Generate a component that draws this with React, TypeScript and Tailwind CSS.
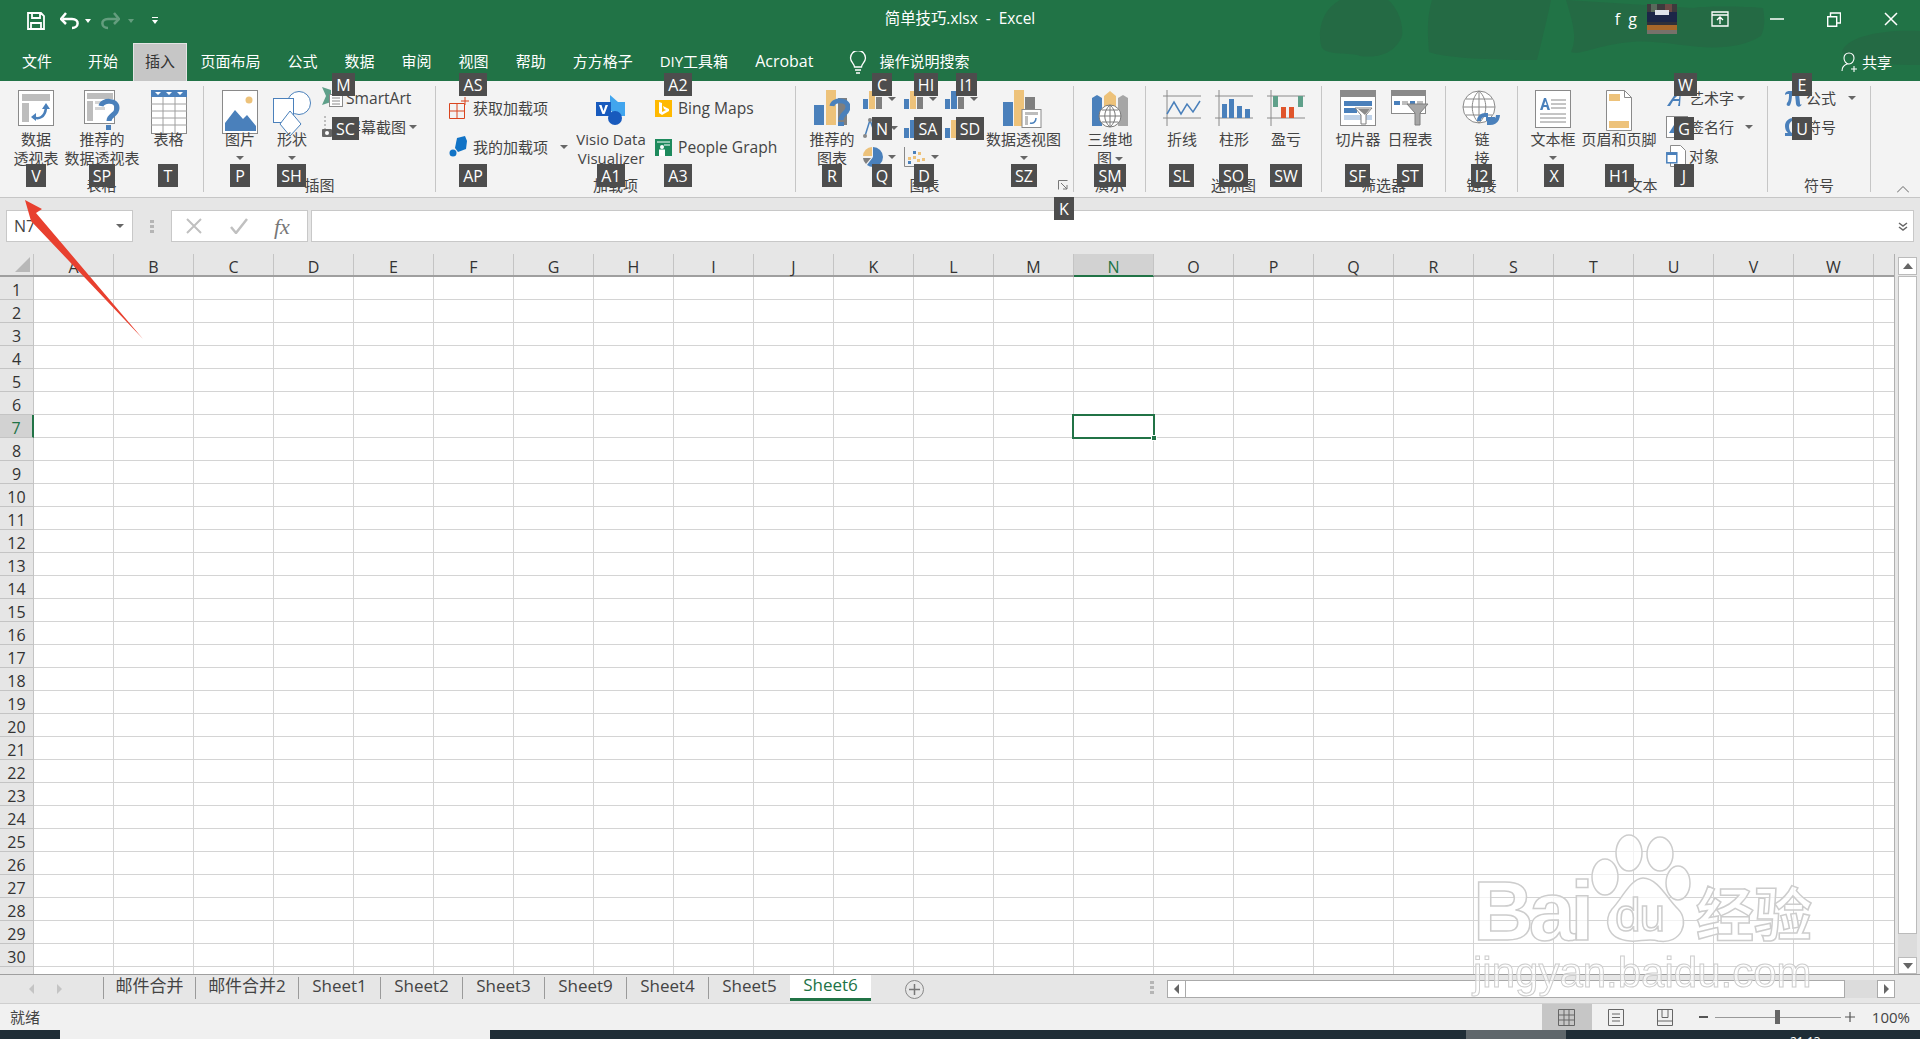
import React from 'react';

const FONT = "font-['Open_Sans','Noto_Sans_CJK_SC',sans-serif]";
const BLUE = '#4a80bb';
const ORANGE = '#edc27a';
const GRAY = '#7f7f7f';

const COLS = 'ABCDEFGHIJKLMNOPQRSTUVW'.split('');
const ROWS = Array.from({ length: 31 }, (_, i) => i + 1);

function Caret({ className = '' }: { className?: string }) {
  return (
    <svg width="8" height="4" viewBox="0 0 8 4" className={'shrink-0 ' + className}>
      <path d="M0 0h8L4 4z" fill="#666" />
    </svg>
  );
}

const Pivot = () => (
  <svg width="36" height="36" viewBox="0 0 36 36">
    <rect x=".5" y=".5" width="35" height="35" fill="#fff" stroke="#8a8a8a" />
    <rect x="4" y="4" width="28" height="7" fill="#bdbdbd" />
    <rect x="4" y="13" width="7" height="19" fill="#bdbdbd" />
    <path d="M15 27c6 3 12 0 13-9" fill="none" stroke={BLUE} strokeWidth="2.5" />
    <path d="M24 19l4-6 4 6zM18 23l-5 4 5 4z" fill={BLUE} />
  </svg>
);

const RecPivot = () => (
  <svg width="36" height="44" viewBox="0 0 36 44" className="-mt-[1px]">
    <rect x=".5" y="1.5" width="30" height="33" fill="#fff" stroke="#8a8a8a" />
    <rect x="3" y="4" width="26" height="6" fill="#bdbdbd" />
    <rect x="3" y="12" width="6" height="20" fill="#bdbdbd" />
    <rect x="11" y="12" width="12" height="3" fill="#d5d5d5" />
    <rect x="11" y="18" width="10" height="3" fill="#d5d5d5" />
    <path d="M17 17c1-6 16-7 16 2 0 7-8 7-8 13" fill="none" stroke={BLUE} strokeWidth="5" />
    <rect x="22" y="36" width="5" height="5" fill={BLUE} />
  </svg>
);

const TableIcon = () => (
  <svg width="36" height="44" viewBox="0 0 36 44">
    <rect x=".5" y=".5" width="35" height="43" fill="#fff" stroke="#8a8a8a" />
    <rect x="0" y="0" width="36" height="7" fill={BLUE} />
    <path d="M4 2h6l-3 3zM15 2h6l-3 3zM26 2h6l-3 3z" fill="#fff" />
    <path d="M0 14h36M0 21h36M0 28h36M0 35h36M12 7v36M24 7v36" stroke="#a0a0a0" fill="none" />
  </svg>
);

const PictureIcon = () => (
  <svg width="36" height="44" viewBox="0 0 36 44">
    <rect x=".5" y=".5" width="35" height="43" fill="#fff" stroke="#8a8a8a" />
    <circle cx="27" cy="10" r="3.5" fill={ORANGE} />
    <path d="M3 41V33L13 20l8 9 4-4 9 11v5z" fill={BLUE} />
  </svg>
);

const ShapesIcon = () => (
  <svg width="38" height="46" viewBox="0 0 38 46">
    <circle cx="26" cy="13" r="11.5" fill="#fff" stroke={BLUE} />
    <rect x=".5" y="8.5" width="20" height="24" fill="#fff" stroke={BLUE} />
    <path d="M17 21l11 13-11 12L7 34z" fill="#fff" stroke={BLUE} />
  </svg>
);

const SmartArtIcon = () => (
  <svg width="24" height="22" viewBox="0 0 24 22">
    <path d="M0 0l9 3v12l-9 3 4-9z" fill="#5fa08a" />
    <rect x="7.5" y="7.5" width="13" height="12" fill="#fff" stroke="#8a8a8a" />
    <path d="M10 11h8M10 14h8M10 17h8" stroke="#8a8a8a" />
  </svg>
);

const ShotIcon = () => (
  <svg width="24" height="22" viewBox="0 0 24 22">
    <path d="M3 0v14" stroke="#888" strokeDasharray="2 2" />
    <rect x="0" y="13" width="10" height="8" rx="1" fill="#666" />
    <circle cx="5" cy="17" r="2" fill="#fff" />
  </svg>
);

const GetAddin = () => (
  <svg width="22" height="22" viewBox="0 0 22 22">
    <path d="M.5 6.5h15v15H.5zM8 6.5v15M.5 14h15" fill="none" stroke="#d9441e" />
    <path d="M16 0v8M12 4h8" stroke="#d9441e" />
  </svg>
);

const MyAddin = () => (
  <svg width="18" height="22" viewBox="0 0 18 22">
    <path d="M8 2l8-2 2 5-1 8-8 3-3-4z" fill="#1173c6" />
    <circle cx="4" cy="17" r="3.5" fill="#1173c6" />
  </svg>
);

const VisioIcon = () => (
  <svg width="30" height="30" viewBox="0 0 30 30" className="mt-[5px]">
    <path d="M14 0l8 7h7v14h-8l-7-6z" fill="#41a5ee" />
    <circle cx="19" cy="23" r="7" fill="#185abd" />
    <rect x="0" y="7" width="15" height="14" fill="#185abd" />
    <path d="M3 10h2.5l2 6 2-6H12l-3.4 9H6.400z" fill="#fff" />
  </svg>
);

const BingIcon = () => (
  <svg width="17" height="17" viewBox="0 0 17 17">
    <rect width="17" height="17" fill="#ffb900" />
    <path d="M4 2l3 1v9l4-2-2-1-1-3 6 3v2l-7 4-3-2z" fill="#fff" />
  </svg>
);

const PeopleIcon = () => (
  <svg width="17" height="17" viewBox="0 0 17 17">
    <rect width="17" height="17" fill="#1d8a5c" />
    <path d="M2 3h13M9 6h6" stroke="#fff" fill="none" />
    <circle cx="7" cy="8" r="2" fill="#fff" />
    <rect x="4" y="10.500" width="6" height="6.500" fill="#fff" />
  </svg>
);

const RecChart = () => (
  <svg width="36" height="36" viewBox="0 0 36 36">
    <rect x="0" y="15" width="10" height="20" fill={BLUE} />
    <rect x="12" y="0" width="10" height="35" fill={ORANGE} />
    <rect x="24" y="8" width="9" height="27" fill={GRAY} />
    <path d="M18 16c1-7 16-7 16 1 0 7-7 6-7 13" fill="none" stroke={BLUE} strokeWidth="5" />
    <rect x="24" y="32" width="6" height="5" fill={BLUE} />
  </svg>
);

const MiniBars = ({ a, b, c }: { a: string; b: string; c: string }) => (
  <svg width="20" height="20" viewBox="0 0 20 20">
    <rect x="0" y="10" width="5" height="10" fill={a} />
    <rect x="6" y="2" width="6" height="18" fill={b} />
    <rect x="13" y="8" width="6" height="12" fill={c} />
  </svg>
);

const PieMini = () => (
  <svg width="20" height="20" viewBox="0 0 20 20">
    <path d="M10 10V0a10 10 0 0 1 0 20 10 10 0 0 1-6-2z" fill={BLUE} />
    <path d="M9 9V0A9 9 0 0 0 0 9z" fill={ORANGE} />
    <path d="M8 11l-5 6a9 9 0 0 1-3-6z" fill={GRAY} />
  </svg>
);

const ScatterMini = () => (
  <svg width="22" height="20" viewBox="0 0 22 20">
    <path d="M.5 0v19.500H22" fill="none" stroke="#888" />
    <path d="M4 10h3v3H4zM9 9h3v3H9zM14 5h3v3h-3zM13 12h3v3h-3zM18 11h3v3h-3z" fill={ORANGE} />
    <path d="M9 4h3v3H9zM4 14h3v3H4z" fill={BLUE} />
  </svg>
);

const StatMini = () => (
  <svg width="22" height="20" viewBox="0 0 22 20">
    <path d="M2 18L7 2l5 14" fill="none" stroke={BLUE} strokeWidth="1.500" />
    <circle cx="7" cy="2" r="2" fill="#888" />
    <circle cx="2" cy="18" r="2" fill="#888" />
    <circle cx="12" cy="16" r="2" fill="#888" />
  </svg>
);

const PivotChart = () => (
  <svg width="42" height="38" viewBox="0 0 42 38">
    <rect x="0" y="12" width="10" height="24" fill={BLUE} />
    <rect x="11" y="0" width="10" height="36" fill={ORANGE} />
    <rect x="22" y="7" width="10" height="29" fill={GRAY} />
    <rect x="19" y="19.500" width="19" height="18" fill="#fff" stroke="#8a8a8a" />
    <rect x="22" y="22" width="13" height="3" fill="#bdbdbd" />
    <rect x="22" y="26" width="3" height="9" fill="#bdbdbd" />
    <path d="M27 33c3 1 6-1 6-5" fill="none" stroke={BLUE} strokeWidth="1.500" />
  </svg>
);

const MapIcon = () => (
  <svg width="36" height="38" viewBox="0 0 36 38">
    <path d="M0 8l5-3 5 3v28H0z" fill={BLUE} />
    <path d="M12 6l6-5 6 5v30H12z" fill={ORANGE} />
    <path d="M26 8l5-3 5 3v28H26z" fill="#a6a6a6" />
    <circle cx="18" cy="26" r="11" fill="#fff" stroke="#7a7a7a" />
    <path d="M7 26h22M18 15v22M10 20h16M10 32h16M18 15c-7 6-7 16 0 22M18 15c7 6 7 16 0 22" fill="none" stroke="#7a7a7a" />
  </svg>
);

const LineSpark = () => (
  <svg width="38" height="36" viewBox="0 0 38 36">
    <path d="M0 6h38M0 28h38M4 0v36" stroke="#8a8a8a" fill="none" />
    <path d="M4 24l7-12 7 12 6-10 6 8 7-11" fill="none" stroke={BLUE} strokeWidth="1.500" />
  </svg>
);

const ColSpark = () => (
  <svg width="38" height="36" viewBox="0 0 38 36">
    <path d="M0 6h38M0 28h38M4 0v36" stroke="#8a8a8a" fill="none" />
    <path d="M7 14h5v14H7zM14 9h5v19h-5zM22 16h5v12h-5zM30 19h5v9h-5z" fill={BLUE} />
  </svg>
);

const WinSpark = () => (
  <svg width="38" height="36" viewBox="0 0 38 36">
    <path d="M0 6h38M0 28h38M4 0v36" stroke="#8a8a8a" fill="none" />
    <path d="M6 6h5v11H6zM31 6h5v11h-5z" fill="#5fa08a" />
    <path d="M14 17h5v11h-5zM22 17h5v11h-5z" fill="#e0552b" />
  </svg>
);

const SlicerIcon = () => (
  <svg width="36" height="36" viewBox="0 0 36 36">
    <rect x=".5" y=".5" width="35" height="35" fill="#fff" stroke="#8a8a8a" />
    <rect x="0" y="0" width="36" height="7" fill="#8a8a8a" />
    <rect x="4" y="11" width="28" height="5" fill={BLUE} />
    <rect x="4" y="18" width="13" height="5" fill={BLUE} />
    <rect x="4" y="25" width="28" height="5" fill="#bfd2e8" />
    <path d="M15 18h17l-6 7v9h-5v-9z" fill="#fff" stroke="#7f7f7f" />
    <path d="M18 19h12l-5 6z" fill="#8a8a8a" />
  </svg>
);

const TimelineIcon = () => (
  <svg width="38" height="36" viewBox="0 0 38 36">
    <rect x=".5" y=".5" width="34" height="23" fill="#fff" stroke="#8a8a8a" />
    <rect x="0" y="0" width="35" height="6" fill="#8a8a8a" />
    <path d="M3 11h6v4H3zM19 11h5v4h-5z" fill={BLUE} />
    <path d="M11 11h6v4h-6zM26 11h6v4h-6z" fill="#bdbdbd" />
    <path d="M16 14h21l-8 9v12h-5V23z" fill="#a6a6a6" stroke="#7f7f7f" />
  </svg>
);

const GlobeLink = () => (
  <svg width="40" height="38" viewBox="0 0 40 38">
    <circle cx="17" cy="17" r="16" fill="#fff" stroke="#8a8a8a" />
    <path d="M1 17h32M17 1v32M4 9h26M4 25h26M17 1c-9 8-9 24 0 32M17 1c9 8 9 24 0 32" fill="none" stroke="#8a8a8a" />
    <path d="M17 31c0-4 3-6 6-6h3M25 33h3c8 0 8-8 8-8M24 29h9" fill="none" stroke={BLUE} strokeWidth="4" />
  </svg>
);

const TextBoxIcon = () => (
  <svg width="36" height="38" viewBox="0 0 36 38">
    <rect x=".5" y=".5" width="35" height="37" fill="#fff" stroke="#8a8a8a" />
    <path d="M5 20l4-12h2l4 12h-2.500l-1-3H8.500l-1 3zM9 15h2.800L10.400 11z" fill={BLUE} fillRule="evenodd" />
    <path d="M16 10h15M16 14h15M16 18h15M5 24h26M5 28h26M5 32h26" stroke="#8a8a8a" />
  </svg>
);

const HeaderIcon = () => (
  <svg width="26" height="42" viewBox="0 0 26 42">
    <path d="M.5.500h18l7 7v33H.5z" fill="#fff" stroke="#8a8a8a" />
    <path d="M18.500.500v7h7" fill="none" stroke="#8a8a8a" />
    <rect x="3" y="4" width="11" height="7" fill={ORANGE} />
    <rect x="3" y="31" width="20" height="7" fill={ORANGE} />
  </svg>
);

const WordArt = () => (
  <svg width="22" height="20" viewBox="0 0 22 20">
    <path d="M1 18L12 2h3l-1 16h-2l1-5H7l-3 5zM8 11h5l1-6z" fill={BLUE} fillRule="evenodd" />
  </svg>
);

const SignIcon = () => (
  <svg width="22" height="22" viewBox="0 0 22 22">
    <rect x=".5" y=".5" width="21" height="21" fill="#fff" stroke="#8a8a8a" />
    <path d="M3 17l5-8 3 8z" fill={BLUE} />
  </svg>
);

const ObjectIcon = () => (
  <svg width="20" height="22" viewBox="0 0 20 22">
    <path d="M4.500.500h10l5 5v16h-15z" fill="#fff" stroke="#8a8a8a" />
    <rect x=".8" y="7.800" width="10" height="10" fill="#fff" stroke={BLUE} strokeWidth="1.500" />
    <rect x="1" y="8" width="10" height="2" fill={BLUE} />
  </svg>
);

const PiIcon = () => (
  <svg width="18" height="20" viewBox="0 0 18 20">
    <path d="M1 6c1-3 3-3 5-3h12v3h-3l1 9c0 2 1 2 2 1-1 3-5 4-6 0l-1-10H8c0 5-1 11-3 12-2 0-3-1-2-3 2-2 2-6 2-9-2 0-3 0-4 1z" fill={BLUE} />
  </svg>
);

const OmegaIcon = () => (
  <svg width="18" height="20" viewBox="0 0 18 20">
    <path d="M1 19v-3h3C2 14 1 12 1 9c0-5 4-8 8-8s8 3 8 8c0 3-1 5-3 7h3v3h-7v-3c2-1 3-4 3-7 0-3-2-5-4-5S5 6 5 9c0 3 1 6 3 7v3z" fill={BLUE} />
  </svg>
);

function Large({ w, icon, lines, caret, className = '' }: { w: string; icon: React.ReactNode; lines: string[]; caret?: 'below' | 'inline'; className?: string }) {
  return (
    <div className={'flex shrink-0 flex-col items-center pt-[4px] ' + w + ' ' + className}>
      <div className="flex h-[40px] items-start justify-center">{icon}</div>
      {lines.map((l, i) => (
        <div key={i} className="flex items-center gap-[3px] whitespace-nowrap leading-[19px]">
          {l}
          {caret === 'inline' && i === lines.length - 1 && <Caret />}
        </div>
      ))}
      {caret === 'below' && <Caret className="mt-[7px]" />}
    </div>
  );
}

function Small({ icon, label, caret, iconW = 'w-[24px]', latin }: { icon: React.ReactNode; label: string; caret?: string; iconW?: string; latin?: boolean }) {
  return (
    <div className="flex h-[26px] items-center whitespace-nowrap">
      <div className={'flex shrink-0 items-center ' + iconW}>{icon}</div>
      <span className={latin ? 'pt-[2px] text-[15.600px]' : ''}>{label}</span>
      {caret && <Caret className={caret} />}
    </div>
  );
}

function Group({ w, label, children, launcher }: { w: string; label: string; children: React.ReactNode; launcher?: boolean }) {
  return (
    <div className={'mt-[5px] flex h-[106px] shrink-0 flex-col border-r border-[#c6c6c6] ' + w}>
      <div className="flex h-[90px] shrink-0">{children}</div>
      <div className="flex h-[20px] shrink-0 items-center pb-[2px] leading-[20px]">
        <div className="flex-1 text-center">{label}</div>
        {launcher && (
          <div className="flex w-[20px] items-center pl-[5px]">
            <svg width="10" height="10" viewBox="0 0 10 10">
              <path d="M.5 9.500v-9h9M3 3l6 6M5 9h4V5" fill="none" stroke="#777" />
            </svg>
          </div>
        )}
      </div>
    </div>
  );
}

function Key({ t, row, x }: { t: string; row: string; x: string }) {
  return (
    <div className={'absolute z-20 flex h-[23px] items-center justify-center bg-[#4d4d4d] text-[16px] text-white ' + row + ' ' + x}>
      {t}
    </div>
  );
}

const TOP = 'top-[73px]';
const MID = 'top-[117px]';
const BOT = 'top-[164px]';

function Tab({ label, active, className = 'px-[12.500px]' }: { label: string; active?: boolean; className?: string }) {
  return (
    <div
      className={
        'flex h-[38px] items-center whitespace-nowrap border border-b-0 pb-[3px] ' +
        (active ? 'border-[#e4e4e4] bg-[#c6c6c6] text-[#333] ' : 'border-transparent text-white ') +
        className
      }
    >
      {label}
    </div>
  );
}

function SheetTab({ label, w, active }: { label: string; w: string; active?: boolean }) {
  return (
    <div
      className={
        'flex shrink-0 items-center justify-center whitespace-nowrap ' +
        w +
        (active
          ? ' h-[26px] border-b-[3px] border-[#217346] bg-white pb-[3px] text-[#217346]'
          : ' my-[2px] h-[22px] border-l border-[#9a9a9a] pb-[5px] text-[#444]')
      }
    >
      {label}
    </div>
  );
}

export default function App() {
  return (
    <div className={'relative flex h-[1039px] w-[1920px] flex-col overflow-hidden bg-[#e6e6e6] text-[15px] text-[#444] ' + FONT}>
      {/* title + tabs */}
      <div className="relative h-[81px] shrink-0 bg-[#217346] text-white">
        <svg width="1920" height="81" viewBox="0 0 1920 81" className="absolute left-0 top-0">
          <path
            d="M1340 0c-22 12-22 38-18 48 6 8 30 4 38 8 14 2 34 0 42-20 2-14-6-30-14-36zM1432 0c-6 20-4 38-3 52 16 6 60 8 108 8 4-16 10-40 14-60zM1566 0c6 20 12 38 5 52 8 4 30-8 60-10 40-4 90 18 130-6 4-8 4-18 2-28-20-2-60-2-70 0z"
            fill="#246a44"
          />
          <path d="M1920 31c-40-2-72 6-78 20 2 8 30 14 78 14z" fill="#246a44" />
        </svg>
        <div className="relative grid h-[43px] grid-cols-[1fr_auto_1fr] items-center pb-[5px]">
          <div className="flex items-center pt-[3px]">
            <svg width="18" height="18" viewBox="0 0 18 18" className="ml-[27px]">
              <path d="M1 1h13l3 3v13H1zM5 1v5h8V1M4 17v-6h10v6" fill="none" stroke="#fff" strokeWidth="1.800" />
            </svg>
            <svg width="20" height="18" viewBox="0 0 20 18" className="ml-[15px]">
              <path d="M3 7h9c8 0 7 9 0 9" fill="none" stroke="#fff" strokeWidth="2.500" />
              <path d="M6 1L1 7l5 5" fill="none" stroke="#fff" strokeWidth="2.500" />
            </svg>
            <svg width="6" height="4" viewBox="0 0 6 4" className="ml-[5px]">
              <path d="M0 0h6L3 4z" fill="#fff" />
            </svg>
            <svg width="20" height="18" viewBox="0 0 20 18" className="ml-[9px] opacity-30">
              <path d="M17 7H8c-8 0-7 9 0 9" fill="none" stroke="#fff" strokeWidth="2.500" />
              <path d="M14 1l5 6-5 5" fill="none" stroke="#fff" strokeWidth="2.500" />
            </svg>
            <svg width="6" height="4" viewBox="0 0 6 4" className="ml-[8px] opacity-30">
              <path d="M0 0h6L3 4z" fill="#fff" />
            </svg>
            <svg width="6" height="8" viewBox="0 0 6 8" className="ml-[18px]">
              <path d="M0 0h6v1H0zM0 3h6L3 7z" fill="#fff" />
            </svg>
          </div>
          <div className="whitespace-pre text-[15.400px]">简单技巧.xlsx  -  Excel</div>
          <div className="flex items-center justify-end">
            <span className="text-[16px] tracking-[2px]">f g</span>
            <svg width="30" height="30" viewBox="0 0 30 30" className="ml-[8px]">
              <rect width="30" height="30" fill="#3d3a3d" />
              <rect x="4" y="0" width="6" height="8" fill="#5a6a5c" />
              <rect x="18" y="0" width="7" height="8" fill="#6b4a45" />
              <rect y="8" width="30" height="10" fill="#1c2648" />
              <rect x="8" y="6" width="14" height="5" fill="#dfe3ea" />
              <rect y="18" width="30" height="3" fill="#30303a" />
              <rect y="21" width="30" height="5" fill="#a8672a" />
              <rect y="26" width="30" height="4" fill="#77716a" />
            </svg>
            <div className="ml-[14px] flex w-[57px] justify-center">
              <svg width="18" height="16" viewBox="0 0 18 16">
                <path d="M1 1h16v14H1zM1 4h16M9 13V6M6 9l3-3 3 3" fill="none" stroke="#fff" strokeWidth="1.300" />
              </svg>
            </div>
            <div className="flex w-[57px] justify-center">
              <svg width="14" height="2" viewBox="0 0 14 2">
                <path d="M0 1h14" stroke="#fff" strokeWidth="1.500" />
              </svg>
            </div>
            <div className="flex w-[57px] justify-center">
              <svg width="14" height="15" viewBox="0 0 14 15">
                <path d="M.7 4.700h9v9.600h-9zM3.500 4.500V1h10v10h-3.500" fill="none" stroke="#fff" strokeWidth="1.400" />
              </svg>
            </div>
            <div className="flex w-[57px] justify-center">
              <svg width="14" height="14" viewBox="0 0 14 14">
                <path d="M1 1l12 12M13 1L1 13" stroke="#fff" strokeWidth="1.500" />
              </svg>
            </div>
            <div className="w-[1px]" />
          </div>
        </div>
        <div className="relative flex h-[38px] items-end">
          <Tab label="文件" className="pl-[21px] pr-[18px]" />
          <Tab label="开始" className="pl-[16px] pr-[14px]" />
          <Tab label="插入" active className="px-[11px]" />
          <Tab label="页面布局" />
          <Tab label="公式" />
          <Tab label="数据" />
          <Tab label="审阅" />
          <Tab label="视图" />
          <Tab label="帮助" />
          <Tab label="方方格子" />
          <Tab label="DIY工具箱" />
          <Tab label="Acrobat" className="pl-[12.500px] pr-[35px] text-[16px]" />
          <svg width="18" height="24" viewBox="0 0 18 24" className="mb-[6px] shrink-0">
            <path d="M5.500 16c0-3-4-5-4-9a7.500 7.500 0 0 1 15 0c0 4-4 6-4 9zM6 19h6M7 22h4" fill="none" stroke="#fff" strokeWidth="1.300" />
          </svg>
          <div className="flex h-[38px] items-center whitespace-nowrap pb-[2px] pl-[12px]">操作说明搜索</div>
          <div className="flex-1" />
          <div className="flex h-[38px] items-center whitespace-nowrap pr-[28px]">
            <svg width="18" height="20" viewBox="0 0 18 20" className="mr-[3px]">
              <path d="M8 1c3 0 5 2 5 5s-2 6-5 6-5-3-5-6 2-5 5-5zM1 19c0-4 2-6 5-7M10 12M13 14v6M10 17h6" fill="none" stroke="#fff" strokeWidth="1.100" />
            </svg>
            共享
          </div>
        </div>
      </div>

      {/* ribbon */}
      <div className="relative flex h-[117px] shrink-0 items-start border-b border-[#c6c6c6] bg-[#f3f3f3]">
        <Group w="w-[204px]" label="表格">
          <Large w="w-[68px] ml-[2px]" icon={<Pivot />} lines={['数据', '透视表']} />
          <Large w="w-[64px]" icon={<RecPivot />} lines={['推荐的', '数据透视表']} />
          <Large w="w-[69px]" icon={<TableIcon />} lines={['表格']} />
        </Group>
        <Group w="w-[232px]" label="插图">
          <Large w="w-[62px] ml-[5px]" icon={<PictureIcon />} lines={['图片']} caret="below" />
          <Large w="w-[42px]" icon={<ShapesIcon />} lines={['形状']} caret="below" />
          <div className="ml-[9px] -mt-[1px] flex flex-col gap-[3px]">
            <Small icon={<SmartArtIcon />} label="SmartArt" latin />
            <Small icon={<ShotIcon />} label="屏幕截图" caret="ml-[3px]" />
          </div>
        </Group>
        <Group w="w-[360px]" label="加载项">
          <div className="ml-[13px] flex w-[126px] shrink-0 flex-col gap-[13px] pt-[9px]">
            <Small icon={<GetAddin />} label="获取加载项" />
            <Small icon={<MyAddin />} label="我的加载项" caret="ml-[12px]" />
          </div>
          <Large w="w-[72px]" icon={<VisioIcon />} lines={['Visio Data', 'Visualizer']} />
          <div className="ml-[8px] flex flex-col gap-[13px] pt-[9px]">
            <Small icon={<BingIcon />} label="Bing Maps" iconW="w-[23px]" latin />
            <Small icon={<PeopleIcon />} label="People Graph" iconW="w-[23px]" latin />
          </div>
        </Group>
        <Group w="w-[278px]" label="图表" launcher>
          <Large w="w-[60px] ml-[6px]" icon={<RecChart />} lines={['推荐的', '图表']} />
          <div className="ml-[1px] grid h-[84px] w-[123px] shrink-0 grid-cols-3 gap-y-[3px]">
            <div className="flex h-[26px] items-center gap-[5px]"><MiniBars a={BLUE} b={ORANGE} c={GRAY} /><Caret /></div>
            <div className="flex h-[26px] items-center gap-[5px]"><MiniBars a={BLUE} b={ORANGE} c={GRAY} /><Caret /></div>
            <div className="flex h-[26px] items-center gap-[5px]"><MiniBars a={BLUE} b={BLUE} c={GRAY} /><Caret /></div>
            <div className="flex h-[26px] items-center gap-[5px]"><StatMini /><Caret /></div>
            <div className="flex h-[26px] items-center gap-[5px]"><MiniBars a={BLUE} b={BLUE} c={BLUE} /><Caret /></div>
            <div className="flex h-[26px] items-center gap-[5px]"><MiniBars a={BLUE} b={ORANGE} c={GRAY} /><Caret /></div>
            <div className="flex h-[26px] items-center gap-[5px]"><PieMini /><Caret /></div>
            <div className="flex h-[26px] items-center gap-[5px]"><ScatterMini /><Caret /></div>
          </div>
          <Large w="w-[75px]" icon={<PivotChart />} lines={['数据透视图']} caret="below" />
        </Group>
        <Group w="w-[72px]" label="演示">
          <Large w="w-[72px]" icon={<MapIcon />} lines={['三维地', '图']} caret="inline" />
        </Group>
        <Group w="w-[176px]" label="迷你图">
          <Large w="w-[52px] ml-[10px]" icon={<LineSpark />} lines={['折线']} />
          <Large w="w-[52px]" icon={<ColSpark />} lines={['柱形']} />
          <Large w="w-[52px]" icon={<WinSpark />} lines={['盈亏']} />
        </Group>
        <Group w="w-[124px]" label="筛选器">
          <Large w="w-[52px] ml-[10px]" icon={<SlicerIcon />} lines={['切片器']} />
          <Large w="w-[52px]" icon={<TimelineIcon />} lines={['日程表']} />
        </Group>
        <Group w="w-[72px]" label="链接">
          <Large w="w-[72px]" icon={<GlobeLink />} lines={['链', '接']} />
        </Group>
        <Group w="w-[250px]" label="文本">
          <Large w="w-[50px] ml-[10px]" icon={<TextBoxIcon />} lines={['文本框']} caret="below" />
          <Large w="w-[82px]" icon={<HeaderIcon />} lines={['页眉和页脚']} />
          <div className="ml-[6px] -mt-[1px] flex flex-col gap-[3px]">
            <Small icon={<WordArt />} label="艺术字" caret="ml-[3px]" iconW="w-[23px]" />
            <Small icon={<SignIcon />} label="签名行" caret="ml-[11px]" iconW="w-[23px]" />
            <Small icon={<ObjectIcon />} label="对象" iconW="w-[23px]" />
          </div>
        </Group>
        <Group w="w-[103px]" label="符号">
          <div className="ml-[16px] -mt-[1px] flex flex-col gap-[3px]">
            <Small icon={<PiIcon />} label="公式" caret="ml-[12px]" iconW="w-[22px]" />
            <Small icon={<OmegaIcon />} label="符号" iconW="w-[22px]" />
          </div>
        </Group>
        <div className="flex flex-1 justify-end pr-[11px] pt-[105px]">
          <svg width="12" height="7" viewBox="0 0 12 7">
            <path d="M0 6.500L6 .5l6 6" fill="none" stroke="#666" />
          </svg>
        </div>
      </div>

      {/* formula bar */}
      <div className="flex h-[56px] shrink-0 items-start pt-[12px]">
        <div className="ml-[6px] flex h-[32px] w-[127px] shrink-0 items-center justify-between border border-[#c8c8c8] bg-white pl-[7px] pr-[8px] text-[16px]">
          N7
          <Caret />
        </div>
        <div className="ml-[17px] mt-[10px] flex w-[4px] shrink-0 flex-col gap-[2px]">
          <div className="h-[3px] bg-[#b5b5b5]" />
          <div className="h-[3px] bg-[#b5b5b5]" />
          <div className="h-[3px] bg-[#b5b5b5]" />
        </div>
        <div className="ml-[17px] flex h-[32px] w-[137px] shrink-0 items-center border border-[#c8c8c8] bg-white">
          <svg width="16" height="16" viewBox="0 0 16 16" className="ml-[14px]">
            <path d="M1 1l14 14M15 1L1 15" stroke="#c0c0c0" strokeWidth="2" />
          </svg>
          <svg width="18" height="16" viewBox="0 0 18 16" className="ml-[28px]">
            <path d="M1 9l5 6L17 1" fill="none" stroke="#c0c0c0" strokeWidth="2.500" />
          </svg>
          <span className="ml-[26px] font-['Liberation_Serif',serif] text-[22px] italic text-[#777]">fx</span>
        </div>
        <div className="ml-[3px] flex h-[32px] w-[1603px] shrink-0 items-center justify-end border border-[#c8c8c8] bg-white pr-[5px]">
          <svg width="10" height="9" viewBox="0 0 10 9">
            <path d="M1 1l4 3 4-3M1 5l4 3 4-3" fill="none" stroke="#666" strokeWidth="1.500" />
          </svg>
        </div>
      </div>

      {/* sheet */}
      <div className="relative flex h-[720px] shrink-0">
        <div className="relative w-[1895px] shrink-0 overflow-hidden border-r border-[#b0b0b0] bg-white">
          <div className="flex h-[23px] border-b-2 border-[#9f9f9f] bg-[#e6e6e6] text-[16px] text-[#333]">
            <div className="flex w-[34px] shrink-0 items-end justify-end border-r border-[#c4c4c4] p-[3px]">
              <svg width="15" height="15" viewBox="0 0 15 15">
                <path d="M15 0v15H0z" fill="#b8b8b8" />
              </svg>
            </div>
            {COLS.map((c) => (
              <div
                key={c}
                className={
                  'flex w-[80px] shrink-0 items-center justify-center border-r border-[#c4c4c4] pt-[4px] ' +
                  (c === 'N' ? '-mb-[2px] border-b-2 border-b-[#217346] bg-[#d2d2d2] text-[#217346]' : '')
                }
              >
                {c}
              </div>
            ))}
          </div>
          {ROWS.map((r) => (
            <div key={r} className="flex h-[23px]">
              <div
                className={
                  'flex w-[34px] shrink-0 items-center justify-center border-b border-r border-[#c4c4c4] pt-[3px] text-[16px] ' +
                  (r === 7 ? 'border-r-2 border-r-[#217346] bg-[#d2d2d2] text-[#217346]' : 'bg-[#e6e6e6] text-[#333]')
                }
              >
                {r}
              </div>
              {COLS.map((c) => (
                <div key={c} className="w-[80px] shrink-0 border-b border-r border-[#d4d4d4]" />
              ))}
              <div className="flex-1 border-b border-[#d4d4d4]" />
            </div>
          ))}
          {/* selected cell N7 */}
          <div className="absolute left-[1072px] top-[160px] h-[25px] w-[83px] border-2 border-[#217346]">
            <div className="absolute -bottom-[4px] -right-[4px] h-[6px] w-[6px] border border-white bg-[#217346]" />
          </div>
        </div>
        {/* vertical scrollbar */}
        <div className="ml-[3px] flex w-[19px] shrink-0 flex-col items-stretch pt-[3px]">
          <div className="flex h-[18px] items-center justify-center border border-[#bbb] bg-white">
            <svg width="10" height="6" viewBox="0 0 10 6">
              <path d="M5 0l5 6H0z" fill="#666" />
            </svg>
          </div>
          <div className="mt-[1px] h-[658px] border border-[#bbb] bg-white" />
          <div className="h-[23px] bg-[#dcdcdc]" />
          <div className="flex h-[17px] items-center justify-center border border-[#bbb] bg-white">
            <svg width="10" height="6" viewBox="0 0 10 6">
              <path d="M5 6l5-6H0z" fill="#666" />
            </svg>
          </div>
        </div>
      </div>

      {/* sheet tabs + h scrollbar */}
      <div className="flex h-[29px] shrink-0 border-t border-[#9f9f9f] text-[17px]">
        <div className="flex w-[103px] shrink-0 items-center gap-[23px] pl-[29px]">
          <svg width="5" height="10" viewBox="0 0 5 10"><path d="M5 0v10L0 5z" fill="#c4c4c4" /></svg>
          <svg width="5" height="10" viewBox="0 0 5 10"><path d="M0 0v10l5-5z" fill="#c4c4c4" /></svg>
        </div>
        <SheetTab label="邮件合并" w="w-[92px]" />
        <SheetTab label="邮件合并2" w="w-[103px]" />
        <SheetTab label="Sheet1" w="w-[82px]" />
        <SheetTab label="Sheet2" w="w-[82px]" />
        <SheetTab label="Sheet3" w="w-[82px]" />
        <SheetTab label="Sheet9" w="w-[82px]" />
        <SheetTab label="Sheet4" w="w-[82px]" />
        <SheetTab label="Sheet5" w="w-[82px]" />
        <SheetTab label="Sheet6" w="w-[81px]" active />
        <div className="ml-[34px] mt-[5px] flex h-[19px] w-[19px] shrink-0 items-center justify-center rounded-full border border-[#888]">
          <svg width="11" height="11" viewBox="0 0 11 11"><path d="M5.500 0v11M0 5.500h11" stroke="#777" strokeWidth="1.500" /></svg>
        </div>
        <div className="ml-[226px] mt-[6px] flex h-[14px] w-[4px] shrink-0 flex-col gap-[2px]">
          <div className="h-[3px] bg-[#b5b5b5]" />
          <div className="h-[3px] bg-[#b5b5b5]" />
          <div className="h-[3px] bg-[#b5b5b5]" />
        </div>
        <div className="ml-[13px] mt-[5px] flex h-[18px] w-[728px] shrink-0 items-stretch">
          <div className="flex w-[19px] items-center justify-center border border-[#aaa] bg-white">
            <svg width="5" height="10" viewBox="0 0 5 10"><path d="M5 0v10L0 5z" fill="#666" /></svg>
          </div>
          <div className="w-[659px] border-y border-r border-[#aaa] bg-white" />
          <div className="w-[32px] bg-[#dcdcdc]" />
          <div className="flex w-[18px] items-center justify-center border border-[#aaa] bg-white">
            <svg width="5" height="10" viewBox="0 0 5 10"><path d="M0 0v10l5-5z" fill="#666" /></svg>
          </div>
        </div>
      </div>

      {/* status bar */}
      <div className="flex h-[27px] shrink-0 items-center border-t border-[#cfcfcf] bg-[#f1f1f1] text-[15px]">
        <span className="pl-[10px]">就绪</span>
        <div className="flex-1" />
        <div className="flex h-[26px] w-[50px] shrink-0 items-center justify-center bg-[#c6c6c6]">
          <svg width="17" height="17" viewBox="0 0 17 17"><path d="M.5.500h16v16H.5zM.5 6h16M.5 11h16M6 .5v16M11 .5v16" fill="none" stroke="#666" /></svg>
        </div>
        <div className="flex w-[49px] shrink-0 justify-center">
          <svg width="16" height="17" viewBox="0 0 16 17"><path d="M.5.500h15v16H.5zM4 5h8M4 8.500h8M4 12h8" fill="none" stroke="#666" /></svg>
        </div>
        <div className="flex w-[49px] shrink-0 justify-center">
          <svg width="16" height="17" viewBox="0 0 16 17"><path d="M.5.500h15v16H.5zM.5 12h15M5 .5v8h6v-8" fill="none" stroke="#666" /></svg>
        </div>
        <div className="ml-[9px] h-[1.500px] w-[9px] shrink-0 bg-[#555]" />
        <div className="relative ml-[7px] flex h-[14px] w-[126px] shrink-0 items-center">
          <div className="h-[1px] w-full bg-[#999]" />
          <div className="absolute left-[60px] top-0 h-[14px] w-[5px] bg-[#666]" />
        </div>
        <svg width="10" height="10" viewBox="0 0 10 10" className="ml-[4px]"><path d="M5 0v10M0 5h10" stroke="#555" strokeWidth="1.200" /></svg>
        <span className="ml-[17px] pr-[10px] text-[15px]">100%</span>
      </div>

      {/* taskbar strip */}
      <div className="flex h-[9px] shrink-0 overflow-hidden bg-[#1f2d36]">
        <div className="w-[60px]" />
        <div className="w-[430px] bg-[#f0f0f0]" />
        <div className="w-[976px]" />
        <div className="w-[100px] bg-[#5f676b]" />
        <div className="pl-[224px] pt-[6px] text-[12px] leading-none text-white">21:13</div>
      </div>

      {/* key tips */}
      <Key t="M" row={TOP} x="left-[332px] w-[23px]" />
      <Key t="AS" row={TOP} x="left-[459px] w-[28px]" />
      <Key t="A2" row={TOP} x="left-[664px] w-[28px]" />
      <Key t="C" row={TOP} x="left-[872px] w-[20px]" />
      <Key t="HI" row={TOP} x="left-[914px] w-[24px]" />
      <Key t="I1" row={TOP} x="left-[956px] w-[21px]" />
      <Key t="W" row={TOP} x="left-[1674px] w-[23px]" />
      <Key t="E" row={TOP} x="left-[1792px] w-[20px]" />
      <Key t="SC" row={MID} x="left-[332px] w-[27px]" />
      <Key t="N" row={MID} x="left-[872px] w-[20px]" />
      <Key t="SA" row={MID} x="left-[914px] w-[28px]" />
      <Key t="SD" row={MID} x="left-[956px] w-[28px]" />
      <Key t="G" row={MID} x="left-[1674px] w-[20px]" />
      <Key t="U" row={MID} x="left-[1792px] w-[20px]" />
      <Key t="V" row={BOT} x="left-[26px] w-[20px]" />
      <Key t="SP" row={BOT} x="left-[89px] w-[26px]" />
      <Key t="T" row={BOT} x="left-[158px] w-[20px]" />
      <Key t="P" row={BOT} x="left-[230px] w-[20px]" />
      <Key t="SH" row={BOT} x="left-[277px] w-[29px]" />
      <Key t="AP" row={BOT} x="left-[459px] w-[28px]" />
      <Key t="A1" row={BOT} x="left-[597px] w-[28px]" />
      <Key t="A3" row={BOT} x="left-[664px] w-[28px]" />
      <Key t="R" row={BOT} x="left-[822px] w-[20px]" />
      <Key t="Q" row={BOT} x="left-[872px] w-[20px]" />
      <Key t="D" row={BOT} x="left-[914px] w-[20px]" />
      <Key t="SZ" row={BOT} x="left-[1011px] w-[26px]" />
      <Key t="SM" row={BOT} x="left-[1094px] w-[32px]" />
      <Key t="SL" row={BOT} x="left-[1169px] w-[25px]" />
      <Key t="SO" row={BOT} x="left-[1219px] w-[29px]" />
      <Key t="SW" row={BOT} x="left-[1270px] w-[32px]" />
      <Key t="SF" row={BOT} x="left-[1345px] w-[25px]" />
      <Key t="ST" row={BOT} x="left-[1397px] w-[26px]" />
      <Key t="I2" row={BOT} x="left-[1471px] w-[21px]" />
      <Key t="X" row={BOT} x="left-[1544px] w-[20px]" />
      <Key t="H1" row={BOT} x="left-[1605px] w-[29px]" />
      <Key t="J" row={BOT} x="left-[1674px] w-[20px]" />
      <Key t="K" row="top-[197px]" x="left-[1054px] w-[20px]" />

      {/* red annotation arrow */}
      <svg width="160" height="150" viewBox="0 0 160 150" className="absolute left-0 top-[198px] z-30">
        <path d="M25 2l17 9-6 4 107 126L31 23z" fill="#e8402f" />
      </svg>

      {/* watermark */}
      <div className="pointer-events-none absolute left-[1470px] top-[832px] z-30 h-[170px] w-[350px] blur-[0.6px]">
        <svg width="350" height="115" viewBox="0 0 350 115" className="absolute left-0 top-0">
          <g fill="#ffffff" fillOpacity="0.7" stroke="#cdcdcd" strokeWidth="1.500">
            <ellipse cx="159" cy="21" rx="13" ry="18" />
            <ellipse cx="190" cy="22" rx="13" ry="17" />
            <ellipse cx="135" cy="45" rx="13" ry="18" />
            <ellipse cx="208" cy="51" rx="12" ry="17" />
            <path d="M173 46c-12 0-22 22-31 31-8 10-7 30 18 32 8 1 20-3 28 0 24 4 32-20 20-32-10-9-20-31-35-31z" />
          </g>
        </svg>
        <div className="absolute left-[3px] top-[37px] flex items-baseline font-['Liberation_Sans',sans-serif] text-[84px] font-bold leading-none tracking-[-5px] text-white/70 [-webkit-text-stroke:1.500px_#cdcdcd]">
          Bai
        </div>
        <div className="absolute left-[145px] top-[60px] font-['Liberation_Sans',sans-serif] text-[46px] leading-none tracking-[-1px] text-white/70 [-webkit-text-stroke:1.500px_#cdcdcd]">
          du
        </div>
        <div className="absolute left-[226px] top-[50px] font-['Noto_Sans_CJK_SC',sans-serif] text-[58px] font-bold leading-none text-white/70 [-webkit-text-stroke:1.500px_#cdcdcd]">
          经验
        </div>
        <div className="absolute left-[3px] top-[120px] whitespace-nowrap font-['Liberation_Sans',sans-serif] text-[42px] leading-none text-white/60 [-webkit-text-stroke:1px_#cdcdcd]">
          jingyan.baidu.com
        </div>
      </div>
    </div>
  );
}
